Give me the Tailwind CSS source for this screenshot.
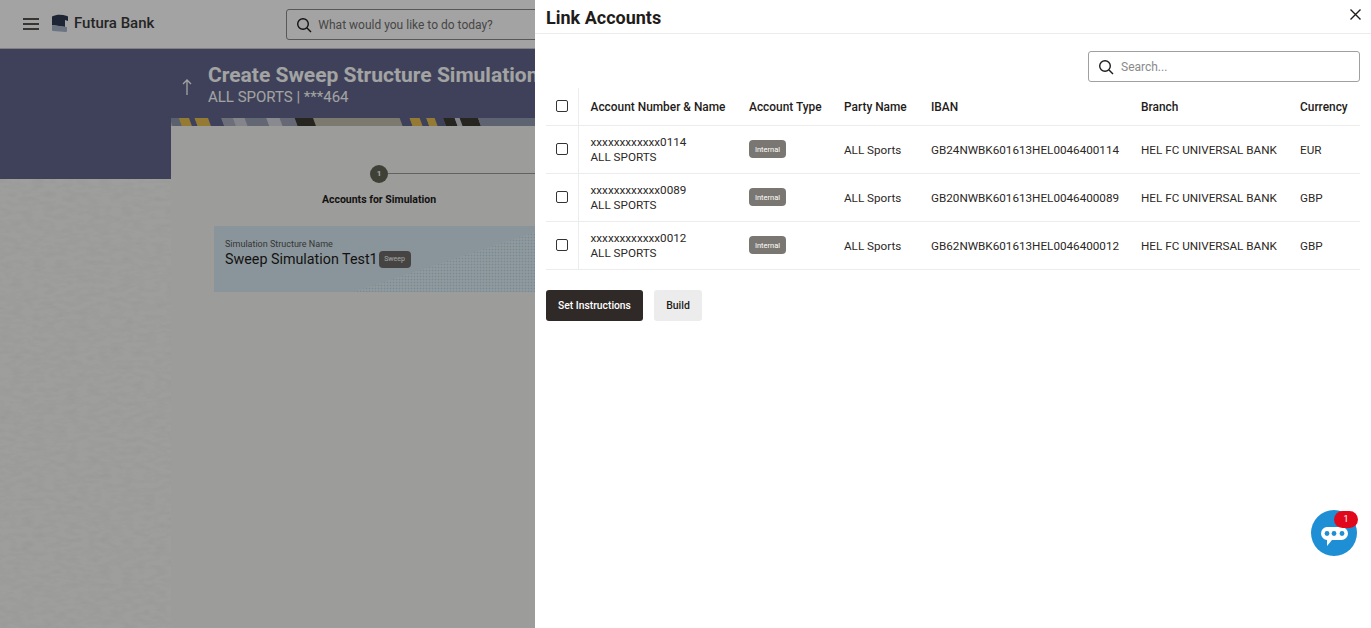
<!DOCTYPE html>
<html lang="en">

<head>
  <title>Link Accounts</title>
  <meta charset="utf-8">
  <meta name="viewport" content="width=device-width, initial-scale=1">
  <script src="https://cdn.jsdelivr.net/npm/@tailwindcss/browser@4"></script>
</head>

<body class="relative w-[1371px] h-[628px] overflow-hidden bg-[#f7f7f5] font-['Roboto',sans-serif] text-[#1f1c1a]">
  <!-- page behind the drawer -->
  <header class="h-[49px] bg-white flex items-center border-b border-[#c8c8c8]">
    <svg class="ml-[23px] w-[16px] h-[12px]" viewBox="0 0 16 12" fill="none" stroke="#1f1c1a" stroke-width="1.4">
      <path d="M0 1h16M0 6h16M0 11h16" />
    </svg>
    <svg class="ml-[12px] w-[17px] h-[18px] -mt-[2px]" viewBox="0 0 17 18">
      <path d="M1 2.5 C6 0 11 .5 16 2 a1 1 0 0 1 1 1 V7 L14 6 V13 L1 11 Z" fill="#2f3a52" />
      <path d="M1 11 L16 13 V17 a1 1 0 0 1-1 1 L2 17 a1 1 0 0 1-1-1 Z" fill="#a9b6cc" />
    </svg>
    <span class="ml-[6px] text-[15px] font-medium text-[#3a3a3a] -mt-[2px]">Futura Bank</span>
    <div class="ml-[132px] w-[300px] h-[31px] border border-[#8a8a8a] rounded-[3px] flex items-center pl-[9px] mt-[1px]">
      <svg class="w-[16px] h-[16px]" viewBox="0 0 16 16" fill="none" stroke="#1f1c1a" stroke-width="1.4">
        <circle cx="7" cy="7" r="5.3" />
        <path d="M11 11l4 4" />
      </svg>
      <span class="ml-[6px] mt-[1px] text-[12px] text-[#6f6f6f]">What would you like to do today?</span>
    </div>
  </header>

  <section class="h-[130px] bg-[#61678b]">
    <div class="flex items-center pl-[181px] pt-[14px]">
      <svg class="w-[12px] h-[16px] mt-[4px]" viewBox="0 0 12 16" fill="none" stroke="#fff" stroke-width="1.3">
        <path d="M6 16V1M2 5l4-4 4 4" />
      </svg>
      <div class="ml-[15px] whitespace-nowrap">
        <h1 class="text-[21px] leading-[24px] font-bold text-white">Create Sweep Structure Simulation</h1>
        <p class="text-[15px] leading-[20px] text-white">ALL SPORTS | ***464</p>
      </div>
    </div>
  </section>

  <main class="flex h-[449px]">
    <div class="w-[171px] relative">
      <svg class="absolute inset-0 w-full h-full">
        <filter id="swirl">
          <feTurbulence type="fractalNoise" baseFrequency="0.09 0.22" numOctaves="2" seed="4" />
          <feColorMatrix values="0 0 0 0 0.55  0 0 0 0 0.55  0 0 0 0 0.55  0.9 0 0 0 -0.36" />
        </filter>
        <rect width="100%" height="100%" filter="url(#swirl)" opacity="0.35" />
      </svg>
    </div>

    <!-- card pulled up over the banner -->
    <div class="relative flex-1 -mt-[61px] h-[510px] bg-[#f4f4f2]">
      <svg class="block w-[364px] h-[8px]" viewBox="0 0 1092 24">
        <rect width="1092" height="24" fill="#c2beae" />
        <g transform="translate(-4 0) skewX(20)">
          <rect x="0" width="28" height="24" fill="#8f96ad" />
          <rect x="28" width="30" height="24" fill="#e8bf50" />
          <rect x="58" width="17" height="24" fill="#61678b" />
          <rect x="75" width="40" height="24" fill="#e8bf50" />
          <rect x="115" width="40" height="24" fill="#61678b" />
          <rect x="155" width="35" height="24" fill="#a9aebf" />
          <rect x="190" width="35" height="24" fill="#cdd0da" />
          <rect x="225" width="65" height="24" fill="#9ca2b6" />
          <rect x="290" width="40" height="24" fill="#d5d8e0" />
          <rect x="330" width="45" height="24" fill="#a0a5b8" />
          <rect x="375" width="55" height="24" fill="#3c3a32" />
          <rect x="690" width="30" height="24" fill="#61678b" />
          <rect x="720" width="30" height="24" fill="#e8bf50" />
          <rect x="750" width="20" height="24" fill="#61678b" />
          <rect x="770" width="25" height="24" fill="#e8bf50" />
          <rect x="795" width="25" height="24" fill="#61678b" />
          <rect x="820" width="35" height="24" fill="#3c3a32" />
          <rect x="855" width="15" height="24" fill="#cdd0da" />
          <rect x="870" width="55" height="24" fill="#3c3a32" />
          <rect x="925" width="175" height="24" fill="#949bb2" />
        </g>
      </svg>

      <div class="w-[416px] pt-[39px] flex flex-col items-center relative">
        <div class="flex items-center justify-center w-[18px] h-[18px] rounded-full bg-[#636757] text-white text-[8px] font-bold">1</div>
        <p class="mt-[10px] text-[10.5px] leading-[14px] font-bold whitespace-nowrap">Accounts for Simulation</p>
        <span class="absolute left-[217px] top-[47px] w-[200px] h-px bg-[#9a9a9a]"></span>
      </div>

      <div class="relative ml-[43px] mt-[19px] w-[900px] h-[66px] bg-[#d7eaf2] pl-[11px] pt-[12px] overflow-hidden">
        <svg class="absolute left-0 top-0 w-[321px] h-[66px]" viewBox="0 0 321 66">
          <pattern id="dots" width="3" height="3" patternUnits="userSpaceOnUse">
            <circle cx="1" cy="1" r="0.7" fill="#f3f8fa" />
            <circle cx="2.5" cy="2.5" r="0.4" fill="#8ccbe8" />
          </pattern>
          <polygon points="139,66 321,6 321,66" fill="url(#dots)" />
        </svg>
        <p class="relative text-[9px] leading-[13px] text-[#555]">Simulation Structure Name</p>
        <div class="relative flex items-center -mt-[2px]">
          <span class="text-[14.3px] leading-[20px]">Sweep Simulation Test1</span>
          <span class="ml-[1px] mt-[1px] w-[32px] h-[17px] rounded-[4px] bg-[#6e6b69] text-white text-[7px] flex items-center justify-center">Sweep</span>
        </div>
      </div>
    </div>
  </main>

  <!-- dimming overlay -->
  <div class="absolute inset-0 bg-black/36"></div>

  <!-- drawer -->
  <aside class="absolute top-0 left-[535px] w-[836px] h-[628px] bg-white">
    <div class="h-[34px] border-b border-[#ececec] flex items-center justify-between pl-[11px] pr-[10px]">
      <h2 class="text-[18px] font-bold mt-[1px] text-[#1f1c1a]">Link Accounts</h2>
      <svg class="w-[11px] h-[11px] -mt-[4px]" viewBox="0 0 11 11" fill="none" stroke="#1f1c1a" stroke-width="1.4">
        <path d="M.5.5l10 10M10.5.5l-10 10" />
      </svg>
    </div>

    <div class="flex justify-end pr-[11px] pt-[17px]">
      <div class="w-[272px] h-[31px] border border-[#a0a0a0] rounded-[3px] flex items-center pl-[9px]">
        <svg class="w-[16px] h-[16px]" viewBox="0 0 16 16" fill="none" stroke="#1f1c1a" stroke-width="1.4">
          <circle cx="7" cy="7" r="5.3" />
          <path d="M11 11l4 4" />
        </svg>
        <span class="ml-[7px] mt-[1px] text-[12px] text-[#8a8a8a]">Search...</span>
      </div>
    </div>

    <table class="ml-[11px] mt-[6px] w-[814px] table-fixed border-collapse text-[11.7px] text-left">
      <colgroup>
        <col class="w-[32px]">
        <col class="w-[159px]">
        <col class="w-[95px]">
        <col class="w-[87px]">
        <col class="w-[210px]">
        <col class="w-[159px]">
        <col class="w-[72px]">
      </colgroup>
      <thead>
        <tr class="h-[37px] border-b border-[#ececec] text-[11.9px] [&>th]:pt-[4px]">
          <th class="border-r border-[#ececec] pl-[10px] pt-0!">
            <span class="block w-[12px] h-[12px] border-[1.5px] border-[#333] rounded-[2px]"></span>
          </th>
          <th class="pl-3 font-medium whitespace-nowrap">Account Number &amp; Name</th>
          <th class="pl-3 font-medium whitespace-nowrap">Account Type</th>
          <th class="pl-3 font-medium whitespace-nowrap">Party Name</th>
          <th class="pl-3 font-medium whitespace-nowrap">IBAN</th>
          <th class="pl-3 font-medium whitespace-nowrap">Branch</th>
          <th class="pl-3 font-medium whitespace-nowrap">Currency</th>
        </tr>
      </thead>
      <tbody class="text-[#2b2826]">
        <tr class="h-[48px] border-b border-[#ececec] [&>td]:pt-[3px]">
          <td class="border-r border-[#ececec] pl-[10px] pt-0!">
            <span class="block w-[12px] h-[12px] border-[1.5px] border-[#333] rounded-[2px]"></span>
          </td>
          <td class="pl-3 pt-[2px]! leading-[15px] whitespace-nowrap">xxxxxxxxxxxx0114<br>ALL SPORTS</td>
          <td class="pl-3 pt-0!"><span class="inline-flex items-center justify-center w-[37px] h-[18px] rounded-[4px] bg-[#7a7672] text-white text-[7.5px]">Internal</span></td>
          <td class="pl-3 whitespace-nowrap">ALL Sports</td>
          <td class="pl-3 whitespace-nowrap">GB24NWBK601613HEL0046400114</td>
          <td class="pl-3 whitespace-nowrap">HEL FC UNIVERSAL BANK</td>
          <td class="pl-3">EUR</td>
        </tr>
        <tr class="h-[48px] border-b border-[#ececec] [&>td]:pt-[3px]">
          <td class="border-r border-[#ececec] pl-[10px] pt-0!">
            <span class="block w-[12px] h-[12px] border-[1.5px] border-[#333] rounded-[2px]"></span>
          </td>
          <td class="pl-3 pt-[2px]! leading-[15px] whitespace-nowrap">xxxxxxxxxxxx0089<br>ALL SPORTS</td>
          <td class="pl-3 pt-0!"><span class="inline-flex items-center justify-center w-[37px] h-[18px] rounded-[4px] bg-[#7a7672] text-white text-[7.5px]">Internal</span></td>
          <td class="pl-3 whitespace-nowrap">ALL Sports</td>
          <td class="pl-3 whitespace-nowrap">GB20NWBK601613HEL0046400089</td>
          <td class="pl-3 whitespace-nowrap">HEL FC UNIVERSAL BANK</td>
          <td class="pl-3">GBP</td>
        </tr>
        <tr class="h-[48px] border-b border-[#ececec] [&>td]:pt-[3px]">
          <td class="border-r border-[#ececec] pl-[10px] pt-0!">
            <span class="block w-[12px] h-[12px] border-[1.5px] border-[#333] rounded-[2px]"></span>
          </td>
          <td class="pl-3 pt-[2px]! leading-[15px] whitespace-nowrap">xxxxxxxxxxxx0012<br>ALL SPORTS</td>
          <td class="pl-3 pt-0!"><span class="inline-flex items-center justify-center w-[37px] h-[18px] rounded-[4px] bg-[#7a7672] text-white text-[7.5px]">Internal</span></td>
          <td class="pl-3 whitespace-nowrap">ALL Sports</td>
          <td class="pl-3 whitespace-nowrap">GB62NWBK601613HEL0046400012</td>
          <td class="pl-3 whitespace-nowrap">HEL FC UNIVERSAL BANK</td>
          <td class="pl-3">GBP</td>
        </tr>
      </tbody>
    </table>

    <div class="flex gap-[11px] pl-[11px] pt-[20px]">
      <button class="w-[97px] h-[31px] pt-[2px] rounded-[3px] bg-[#2f2a27] text-white text-[10.3px] font-medium">Set Instructions</button>
      <button class="w-[48px] h-[31px] pt-[2px] rounded-[3px] bg-[#ececec] text-[#1f1c1a] text-[10.5px] font-medium">Build</button>
    </div>
  </aside>

  <!-- chat widget -->
  <div class="absolute left-[1311px] top-[510px] w-[46px] h-[46px] rounded-full bg-[#1e8fd5] flex items-center justify-center">
    <svg class="w-[28px] h-[20px] mt-[8px]" viewBox="0 0 28 20">
      <path d="M6.5 0h15a6.5 6.5 0 0 1 0 13H12l-5 6v-6.1A6.5 6.5 0 0 1 6.5 0z" fill="#fff" />
      <circle cx="7" cy="6.5" r="2.4" fill="#1e8fd5" />
      <circle cx="14" cy="6.5" r="2.4" fill="#1e8fd5" />
      <circle cx="22" cy="6.5" r="2.4" fill="#1e8fd5" />
    </svg>
  </div>
  <div class="absolute left-[1334px] top-[511px] w-[24px] h-[17px] rounded-full bg-[#e2081c] text-white text-[9px] flex items-center justify-center">1</div>
</body>

</html>
